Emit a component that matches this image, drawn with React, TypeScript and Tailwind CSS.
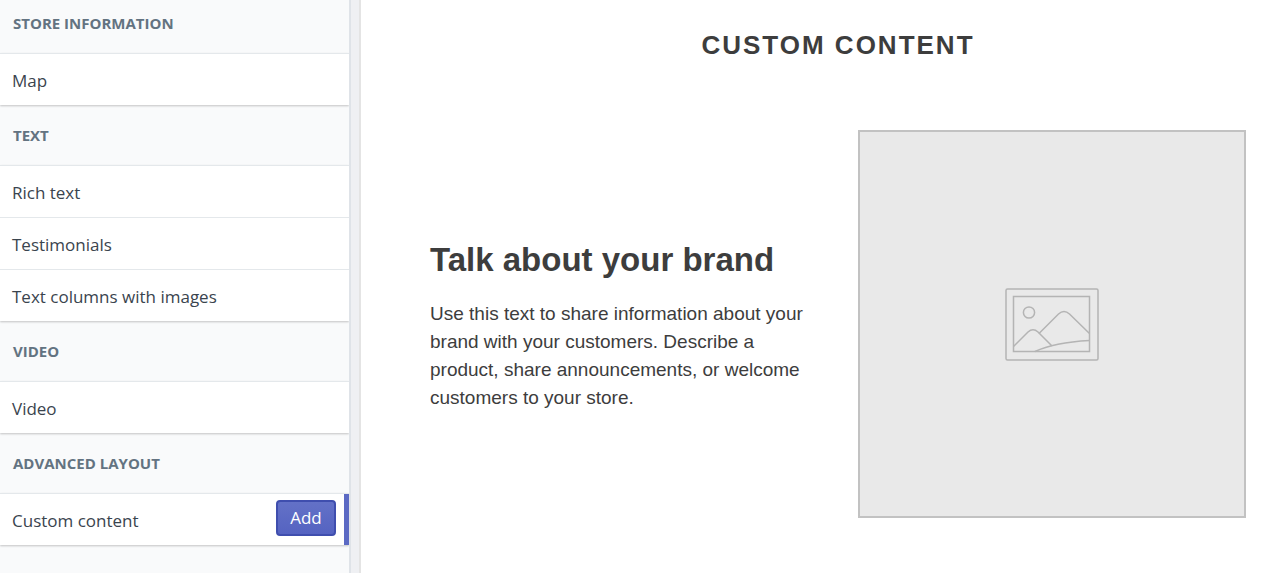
/** @file App.tsx — Theme editor: section picker sidebar with a preview of the selected section. */

const sectionGroups = [
  { title: "Store information", items: ["Map"] },
  { title: "Text", items: ["Rich text", "Testimonials", "Text columns with images"] },
  { title: "Video", items: ["Video"] },
  { title: "Advanced layout", items: ["Custom content"] },
];

const selected = "Custom content";

function SectionItem({ name }: { name: string }) {
  const active = name === selected;
  return (
    <li
      className={`flex h-[52px] items-center justify-between border-t border-[#e4e8eb] bg-white pr-[13px] pl-3 text-[17px] text-[#3a444e] ${
        active ? "shadow-[inset_-5px_0_0_#5c6ac4]" : ""
      }`}
    >
      <span className="pt-0.5">{name}</span>
      {active && (
        <button
          type="button"
          className="mb-1 h-9 w-[60px] rounded-[4px] border-2 border-[#3f4eae] bg-linear-to-b from-[#6371c7] to-[#5563c1] text-[17px] leading-none text-white"
        >
          Add
        </button>
      )}
    </li>
  );
}

function PlaceholderIcon() {
  return (
    <svg viewBox="0 0 94 73" className="w-[94px]" fill="none" stroke="#b4b4b4" strokeWidth="1.5" aria-hidden="true">
      <rect x="1" y="1" width="92" height="71" rx="1.5" />
      <rect x="8.5" y="8.5" width="76" height="55" />
      <circle cx="24" cy="24.5" r="5.6" />
      <path d="M8.5 58.5 23 44q5-4.500 10 0L47 58" />
      <path d="M34 45.500 53.500 26q5.500-5 11 0L84.500 45.500" />
      <path d="M30 63.500Q49 54.500 84.500 52.500" />
    </svg>
  );
}

export default function App() {
  return (
    <div className="flex min-h-screen bg-white">
      <aside className="w-[349px] shrink-0 bg-[#f9fafb] font-['Open_Sans','Noto_Sans',sans-serif]">
        {sectionGroups.map((group) => (
          <section key={group.title} className="group">
            <h2 className="pt-5 pb-5 pl-[13px] text-[15px] leading-5 font-bold text-[#637381] uppercase group-first:pt-[13px]">
              {group.title}
            </h2>
            <ul className="shadow-[0_1px_2px_rgba(0,0,0,0.22)]">
              {group.items.map((name) => (
                <SectionItem key={name} name={name} />
              ))}
            </ul>
          </section>
        ))}
      </aside>
      <div className="w-3 shrink-0 border-x-2 border-l-[#dfe3e8] border-r-[#e4e4e4] bg-[#eff0f3]" />

      <main className="flex-1 pt-7 pr-[34px] pl-[69px] font-['Liberation_Sans',Arial,sans-serif] text-[#3d3d3d]">
        <h1 className="text-center text-[26px] leading-[34px] font-bold tracking-[2px] uppercase">Custom content</h1>
        <div className="mt-[68px] grid grid-cols-2 items-center gap-10">
          <div className="pt-1">
            <h2 className="text-[33px] leading-10 font-bold">Talk about your brand</h2>
            <p className="mt-5 text-[19px] leading-7">
              Use this text to share information about your brand with your customers. Describe a product, share
              announcements, or welcome customers to your store.
            </p>
          </div>
          <div className="flex aspect-square items-center justify-center border-2 border-[#c2c2c2] bg-[#e9e9e9]">
            <PlaceholderIcon />
          </div>
        </div>
      </main>
    </div>
  );
}
